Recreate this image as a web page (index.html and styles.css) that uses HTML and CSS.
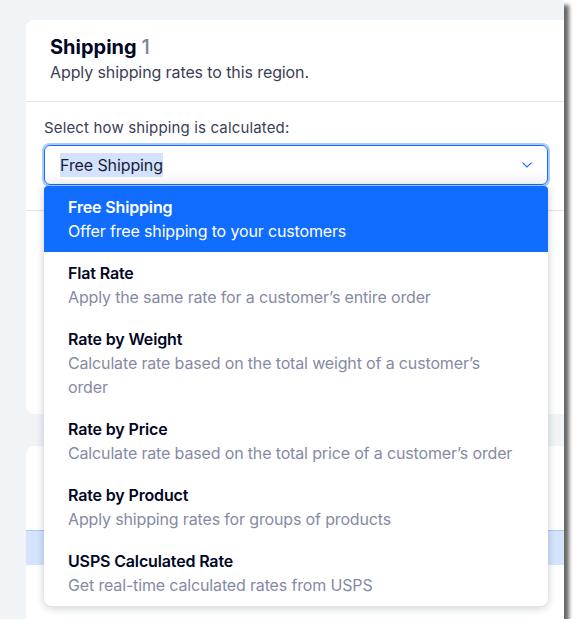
FILE: index.html
```html
<!DOCTYPE html>
<html lang="en">
<head>
<meta charset="utf-8">
<title>Shipping</title>
<link rel="stylesheet" href="styles.css">
</head>
<body>
<div class="frame">
  <div class="card card-top">
    <div class="card-header">
      <h2 class="title">Shipping <span class="count">1</span></h2>
      <p class="subtitle">Apply shipping rates to this region.</p>
    </div>
    <div class="section">
      <div class="field-label">Select how shipping is calculated:</div>
      <div class="select">
        <div class="select-input">
          <span class="value">Free Shipping</span>
          <svg class="chev" width="10" height="6" viewBox="0 0 10 6"><path d="M0.5 0.6 L5 5 L9.5 0.6" fill="none" stroke="#116dff" stroke-width="1.1"/></svg>
        </div>
        <ul class="menu">
          <li class="opt selected"><div class="opt-title">Free Shipping</div><div class="opt-desc">Offer free shipping to your customers</div></li>
          <li class="opt"><div class="opt-title">Flat Rate</div><div class="opt-desc">Apply the same rate for a customer’s entire order</div></li>
          <li class="opt"><div class="opt-title">Rate by Weight</div><div class="opt-desc">Calculate rate based on the total weight of a customer’s order</div></li>
          <li class="opt"><div class="opt-title">Rate by Price</div><div class="opt-desc">Calculate rate based on the total price of a customer’s order</div></li>
          <li class="opt"><div class="opt-title">Rate by Product</div><div class="opt-desc">Apply shipping rates for groups of products</div></li>
          <li class="opt"><div class="opt-title">USPS Calculated Rate</div><div class="opt-desc">Get real-time calculated rates from USPS</div></li>
        </ul>
      </div>
    </div>
  </div>
  <div class="card card-bottom">
    <div class="row-plain"></div>
    <div class="row-highlight"></div>
  </div>
</div>
</body>
</html>
```

FILE: styles.css
```css
* { box-sizing: border-box; }
html, body { margin: 0; padding: 0; background: #ffffff; }
body { font-family: "Inter", "Noto Sans", sans-serif; color: #000624; }

.frame {
  width: 564px;
  height: 619px;
  background: #f0f4f7;
  padding: 20px 0 0 26px;
  overflow: hidden;
  box-shadow: 5px 5px 4px rgba(0, 0, 0, 0.6);
  position: relative;
}

.card {
  background: #ffffff;
  border-radius: 8px;
  margin-right: -40px;
}
.card-top {
  height: 394px;
  position: relative;
  z-index: 2;
}
.card-bottom {
  margin-top: 32px;
  height: 240px;
  padding-top: 84px;
}

.card-header {
  padding: 15px 24px 19px;
  border-bottom: 1px solid #dfe5eb;
}
.title {
  margin: 0;
  font-size: 20px;
  line-height: 24px;
  font-weight: 700;
  color: #000624;
}
.count { color: #7a8599; font-weight: 500; }
.subtitle {
  margin: 3px 0 0;
  font-size: 16px;
  line-height: 20px;
  letter-spacing: -0.1px;
  color: #3b4057;
}

.section {
  padding: 17px 0 25px 18px;
  border-bottom: 1px solid #dfe5eb;
}
.field-label {
  font-size: 15px;
  line-height: 18px;
  letter-spacing: 0.15px;
  color: #3b4057;
  margin-bottom: 8px;
}

.select {
  position: relative;
  width: 504px;
}
.select-input {
  height: 40px;
  border: 1px solid #116dff;
  border-radius: 6px;
  box-shadow: 0 0 0 2px #a9c9ff;
  background: linear-gradient(#ffffff 60%, #f6f7f9);
  display: flex;
  align-items: center;
  justify-content: space-between;
  padding: 0 15px;
}
.value {
  font-size: 16px;
  line-height: 24px;
  letter-spacing: -0.1px;
  color: #1a1c35;
  background: #d3e2fd;
}
.chev { display: block; }

.menu {
  position: absolute;
  top: 41px;
  left: 0;
  width: 504px;
  margin: 0;
  padding: 0;
  list-style: none;
  background: #ffffff;
  border-radius: 4px 4px 8px 8px;
  box-shadow: 0 0 10px rgba(22, 45, 61, 0.14), 0 4px 8px rgba(22, 45, 61, 0.1);
  overflow: hidden;
}
.opt {
  padding: 9px 30px 9px 24px;
  font-size: 16px;
  line-height: 24px;
  letter-spacing: -0.15px;
}
.opt-title { font-weight: 600; color: #000624; }
.opt-desc { color: #868aa5; }
.opt.selected { background: #116dff; }
.opt.selected .opt-title,
.opt.selected .opt-desc { color: #ffffff; }

.row-highlight {
  height: 35px;
  background: #d5e4fd;
  border-top: 1px solid #a9c8f7;
}
```
